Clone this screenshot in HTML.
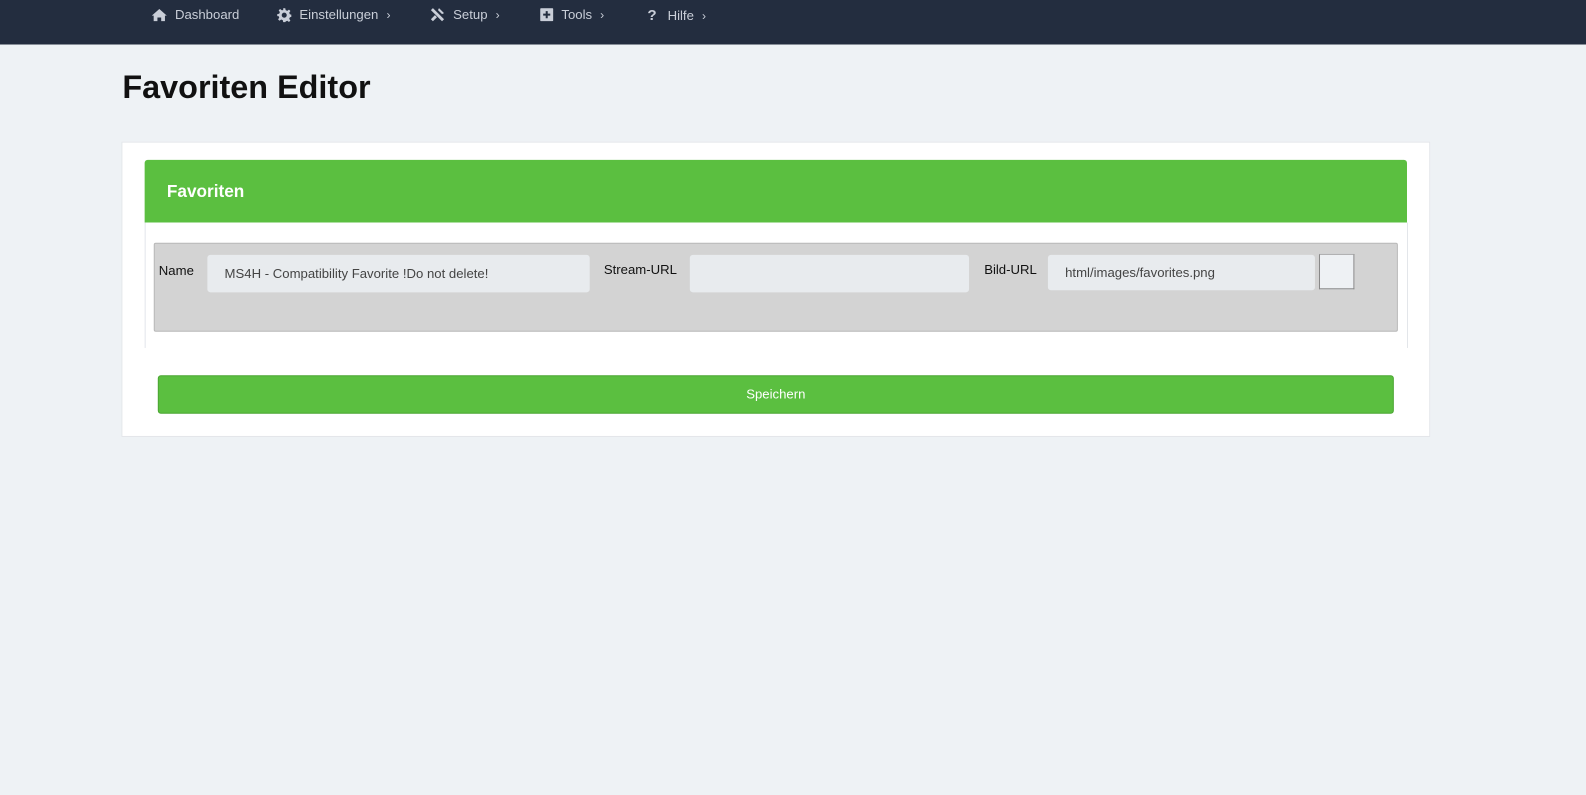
<!DOCTYPE html>
<html><head><meta charset="utf-8"><style>
*{box-sizing:border-box;margin:0;padding:0}
body{width:1586px;height:786px;background:#eef2f5;font-family:"Liberation Sans",Arial,sans-serif;position:relative;overflow:hidden}
.wrap{position:absolute;left:0;top:0;width:1586px;height:786px;transform:scale(1.0115);transform-origin:0 0}
.nav{position:absolute;left:0;top:0;width:1600px;height:44px;background:#232d3f}
.ni{position:absolute;top:7px;color:#c9ced8;font-size:13px;display:flex;align-items:center;gap:8px}
.ni svg{fill:#c9ced8}
h1{position:absolute;left:121px;top:68px;font-size:32px;font-weight:bold;color:#111}
.card{position:absolute;left:120px;top:140px;width:1294px;height:292px;background:#fff;border:1px solid #e3e6ea}
.hd{position:absolute;left:143px;top:158px;width:1248px;height:62px;background:#5bbf40;border-radius:3px 3px 0 0;color:#fff;font-weight:bold;font-size:17px;padding:22px 0 0 22px}
.bd{position:absolute;left:143px;top:220px;width:1249px;height:124px;border-left:1px solid #e3e6ea;border-right:1px solid #e3e6ea}
.row{position:absolute;left:152px;top:240px;width:1230px;height:88px;background:#d3d3d3;border:1px solid #b8b8b8;border-radius:2px}
.lb{position:absolute;font-size:13px;color:#111}
.in{position:absolute;background:#e8ebee;border-radius:3px;font-size:13px;color:#444;padding:0 0 0 17px;display:flex;align-items:center}
.btn{position:absolute;left:156px;top:371px;width:1222px;height:38px;background:#5bbf40;border:1px solid #4aa632;border-radius:3px;color:#fff;font-size:13px;text-align:center;line-height:36px}
</style></head><body><div class="wrap">
<div class="nav">
<div class="ni" style="left:150px"><svg width="15" height="13" viewBox="0 0 16 14"><path d="M8 1 0 8h2v6h4V10h4v4h4V8h2z"/></svg>Dashboard</div>
<div class="ni" style="left:274px"><svg width="14" height="14" viewBox="0 0 14 14"><path d="M6 0h2l.4 2 1.6.7 1.7-1.2 1.4 1.4-1.2 1.7.7 1.6 2 .4v2l-2 .4-.7 1.6 1.2 1.7-1.4 1.4-1.7-1.2-1.6.7L8 14H6l-.4-2-1.6-.7-1.7 1.2-1.4-1.4 1.2-1.7L1.4 8 0 8V6l2-.4.7-1.6-1.2-1.7 1.4-1.4 1.7 1.2L6 2z M7 4.5a2.5 2.5 0 1 0 0 5 2.5 2.5 0 0 0 0-5z" fill-rule="evenodd"/></svg>Einstellungen <span style="font-size:12px">›</span></div>
<div class="ni" style="left:425px"><svg width="15" height="15" viewBox="0 0 15 15"><path d="M1 3 3 1l11 11-2 2zM9 1l5 5-2 1-4-4zM1 12l4-4 2 2-4 4z"/></svg>Setup <span style="font-size:12px">›</span></div>
<div class="ni" style="left:534px"><svg width="13" height="13" viewBox="0 0 13 13"><path d="M1 0h11a1 1 0 0 1 1 1v11a1 1 0 0 1-1 1H1a1 1 0 0 1-1-1V1a1 1 0 0 1 1-1zM5.5 3v2.5H3v2h2.5V10h2V7.5H10v-2H7.5V3z" fill-rule="evenodd"/></svg>Tools <span style="font-size:12px">›</span></div>
<div class="ni" style="left:640px"><b style="font-size:15px;color:#c9ced8;width:12px">?</b>Hilfe <span style="font-size:12px">›</span></div>
</div>
<h1>Favoriten Editor</h1>
<div class="card"></div>
<div class="hd">Favoriten</div>
<div class="bd"></div>
<div class="row"></div>
<div class="lb" style="left:157px;top:260px">Name</div>
<div class="in" style="left:205px;top:252px;width:378px;height:37px">MS4H - Compatibility Favorite !Do not delete!</div>
<div class="lb" style="left:597px;top:259px">Stream-URL</div>
<div class="in" style="left:682px;top:252px;width:276px;height:37px"></div>
<div class="lb" style="left:973px;top:259px">Bild-URL</div>
<div class="in" style="left:1036px;top:252px;width:264px;height:35px">html/images/favorites.png</div>
<div style="position:absolute;left:1304px;top:251px;width:35px;height:35px;background:#eef1f4;border:1px solid #888;border-top-color:#aaa"></div>
<div class="btn">Speichern</div>
</div></body></html>
